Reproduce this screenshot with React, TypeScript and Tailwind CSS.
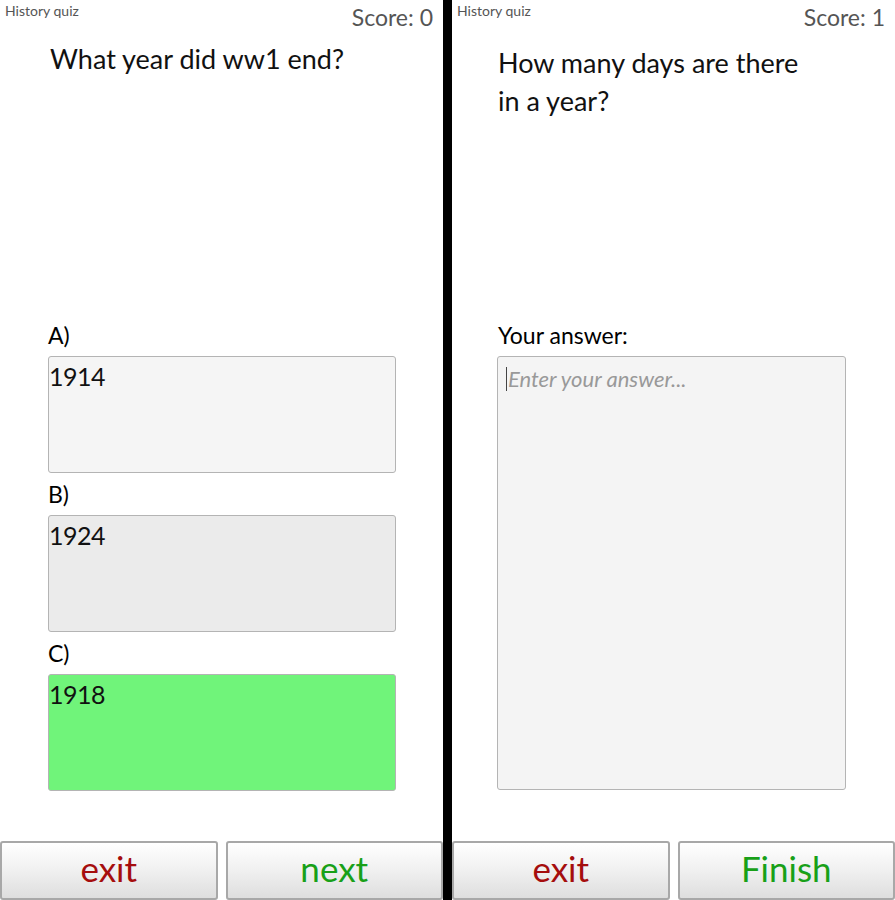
const font = "font-['Lato','DejaVu_Sans',sans-serif]";

function Header({ score }: { score: number }) {
  return (
    <div className="flex justify-between items-start h-[40px]">
      <span className="pl-[5px] pt-[1px] text-[14px] leading-[20px] text-[#555]">History quiz</span>
      <span className="pr-[10px] pt-[2px] text-[23px] leading-[30px] text-[#555]">Score: {score}</span>
    </div>
  );
}

function AnswerBox({ label, value, bg }: { label: string; value: string; bg: string }) {
  return (
    <div className="flex flex-col">
      <span className="text-[23px] leading-[30px] h-[36px] text-black">{label}</span>
      <div className={`h-[117px] w-[348px] rounded-[3px] border border-[#b4b4b4] ${bg}`}>
        <span className="block text-[25px] leading-[38px] text-[#111] tracking-[-0.5px]">{value}</span>
      </div>
    </div>
  );
}

function BottomButtons({ right }: { right: string }) {
  const btn =
    "h-[59px] flex items-center justify-center rounded-[3px] border-2 border-[#a8a8a8] bg-gradient-to-b from-[#ffffff] via-[#f0f0f0] to-[#dedede] text-[35px] leading-none pb-[4px]";
  return (
    <div className="grid grid-cols-2 gap-[8px]">
      <div className={`${btn} text-[#a50d0d]`}>exit</div>
      <div className={`${btn} text-[#18a018]`}>{right}</div>
    </div>
  );
}

export default function App() {
  return (
    <div className={`w-[895px] h-[900px] flex bg-white overflow-hidden ${font}`}>
      {/* left: multiple choice */}
      <div className="w-[443px] h-full flex flex-col">
        <Header score={0} />
        <div className="pl-[50px] text-[27px] leading-[38px] text-[#111]">What year did ww1 end?</div>
        <div className="pl-[48px] mt-[242px] flex flex-col gap-[6px]">
          <AnswerBox label="A)" value="1914" bg="bg-[#f5f5f5]" />
          <AnswerBox label="B)" value="1924" bg="bg-[#ebebeb]" />
          <AnswerBox label="C)" value="1918" bg="bg-[#70f47a] border-[#5cc764]" />
        </div>
        <div className="mt-auto">
          <BottomButtons right="next" />
        </div>
      </div>

      <div className="w-[9px] h-full bg-black" />

      {/* right: free answer */}
      <div className="flex-1 h-full flex flex-col">
        <Header score={1} />
        <div className="pl-[46px] pt-[4px] text-[27px] leading-[38px] text-[#111] w-[362px]">
          How many days are there in a year?
        </div>
        <div className="pl-[45px] mt-[200px] flex flex-col">
          <span className="pl-[1px] text-[23px] leading-[30px] h-[36px] text-black">Your answer:</span>
          <div className="h-[434px] w-[349px] rounded-[3px] border border-[#b4b4b4] bg-[#f4f4f4] flex items-start pt-[10px] pl-[8px]">
            <span className="w-[1px] h-[24px] bg-[#444] mr-[1px]" />
            <span className="text-[22px] leading-[24px] italic text-[#999]">Enter your answer...</span>
          </div>
        </div>
        <div className="mt-auto">
          <BottomButtons right="Finish" />
        </div>
      </div>
    </div>
  );
}
